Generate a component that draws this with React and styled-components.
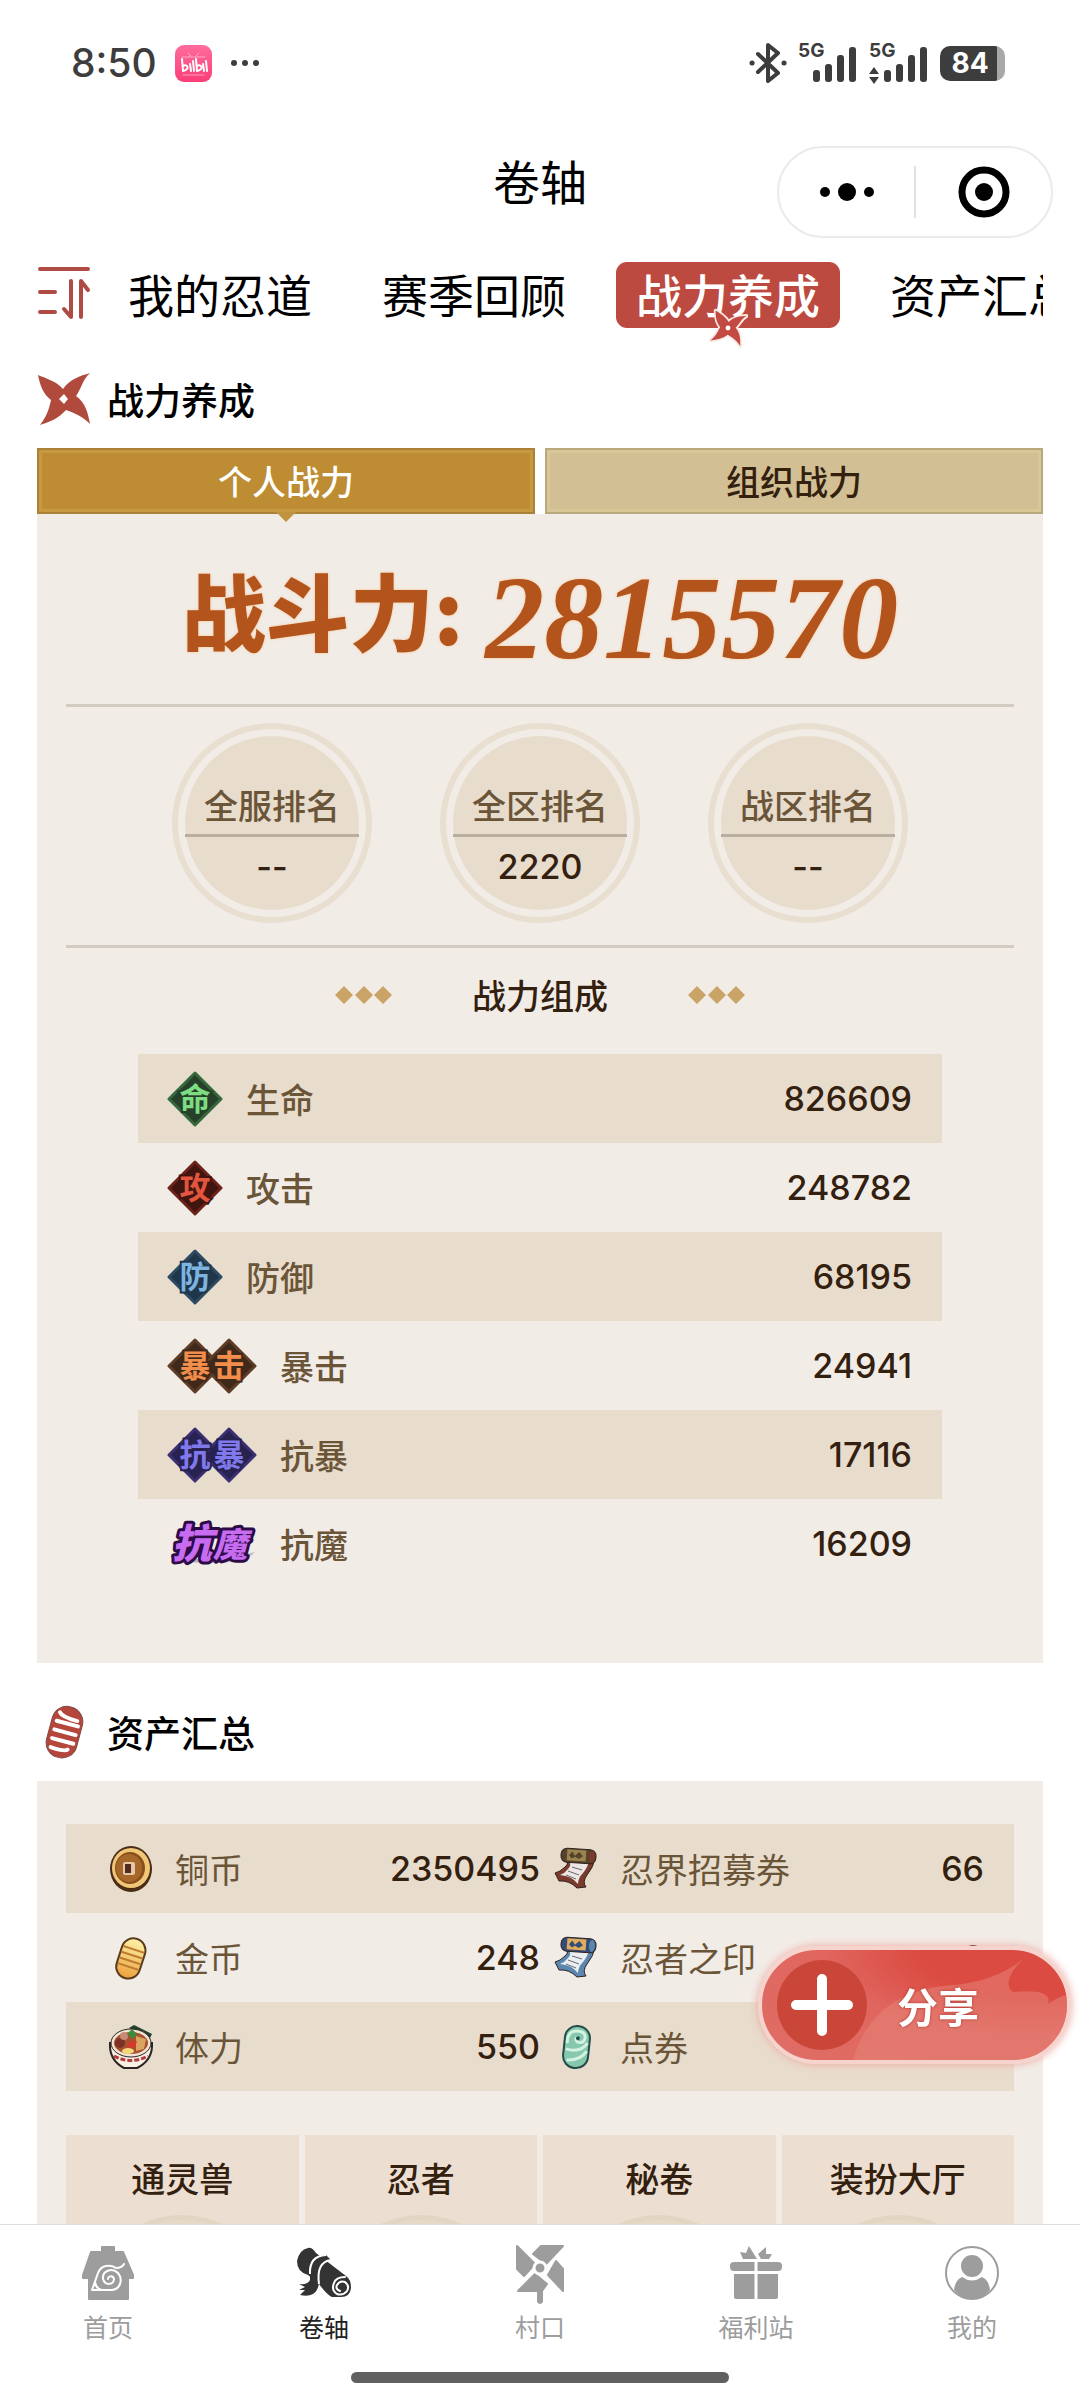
import React from 'react';
import styled, { createGlobalStyle, css, ThemeProvider } from 'styled-components';

const theme = {
    red: '#bd4a40',
    brown: '#6b5538',
    dark: '#33200f',
    panel: '#f2ece7',
    sand: '#e8dccd',
    line: '#d1cbc2',
    grey: '#9d9d9d',
};

const GlobalStyle = createGlobalStyle`
    *, *:before, *:after {
        box-sizing: border-box;
    }
    body {
        margin: 0;
        background: #fff;
        color: #000;
        font-family: "Noto Sans CJK SC", "Noto Sans", sans-serif;
    }
    button {
        margin: 0;
        padding: 0;
        border: 0;
        background: none;
        color: inherit;
        font: inherit;
    }
    a {
        color: inherit;
        text-decoration: none;
    }
    svg {
        display: block;
        flex: none;
    }
    h1, h2, h3, p {
        margin: 0;
    }
`;

const Page = styled.div`
    display: flex;
    flex-direction: column;
    height: 100vh;
    overflow: hidden;
`;

/* ---------- status bar ---------- */

const StatusBar = styled.div`
    display: flex;
    justify-content: space-between;
    align-items: center;
    flex: none;
    height: 126px;
    padding: 0 75px 0 71px;
    color: #3d3d3d;
`;

const StatusGroup = styled.div`
    display: flex;
    align-items: center;
    gap: 18px;
`;

const Clock = styled.span`
    font-family: Inter, sans-serif;
    font-size: 39px;
    font-weight: 500;
    line-height: 48px;
`;

const AppBadge = styled.span`
    display: flex;
    align-items: center;
    justify-content: center;
    width: 37px;
    height: 37px;
    border-radius: 9px;
    background: linear-gradient(#ff6d9c, #fb3d77);
`;

const Battery = styled.span`
    display: flex;
    align-items: center;
    justify-content: center;
    width: 65px;
    height: 35px;
    border-radius: 10px;
    background: linear-gradient(to right, #3d3d3d 57px, #a8a8a8 57px);
    color: #fff;
    font-family: Inter, sans-serif;
    font-size: 28px;
    font-weight: 700;
    line-height: 35px;
    padding-right: 5px;
`;

const Signals = styled.div`
    display: flex;
    align-items: center;
    gap: 11px;
`;

/* ---------- nav bar ---------- */

const NavBar = styled.header`
    display: grid;
    grid-template-columns: 1fr auto 1fr;
    flex: none;
    height: 112px;
    padding: 0 27px;
`;

const Title = styled.h1`
    grid-column: 2;
    font-size: 47px;
    font-weight: 400;
    line-height: 108px;
`;

const Capsule = styled.div`
    display: flex;
    align-items: center;
    justify-self: end;
    align-self: end;
    width: 276px;
    height: 92px;
    border: 2px solid #ebebeb;
    border-radius: 46px;
    button {
        display: flex;
        flex: 1;
        justify-content: center;
    }
    button + button {
        border-left: 2px solid #e2e2e2;
    }
`;

/* ---------- scroll tabs ---------- */

const Tabs = styled.nav`
    display: flex;
    flex: none;
    height: 112px;
    margin: 0 37px;
`;

const MenuButton = styled.button`
    align-self: flex-start;
    padding-top: 28px;
`;

const TabScroller = styled.div`
    display: flex;
    flex: 1;
    gap: 30px;
    margin-left: 17px;
    padding-top: 24px;
    overflow: hidden;
`;

const Tab = styled.a`
    position: relative;
    flex: none;
    height: 66px;
    padding: 0 20px;
    border-radius: 11px;
    font-size: 46px;
    line-height: 62px;
    ${props => props.$active && css`
        background: ${props.theme.red};
        color: #fff;
        font-weight: 500;
    `}
    svg {
        position: absolute;
        left: 92px;
        top: 46px;
    }
`;

/* ---------- content ---------- */

const Content = styled.main`
    flex: 1;
    min-height: 0;
    padding: 0 37px;
    overflow: hidden;
`;

const SectionHeader = styled.div`
    display: flex;
    align-items: center;
    gap: 15px;
    height: 98px;
    margin-top: ${props => (props.$spaced ? '20px' : '0')};
    h2 {
        font-size: 37px;
        font-weight: 500;
        line-height: 48px;
    }
`;

const Switcher = styled.div`
    display: grid;
    grid-template-columns: 1fr 1fr;
    gap: 10px;
`;

const SwitchButton = styled.button`
    position: relative;
    height: 66px;
    border: 2px solid ${props => (props.$active ? '#aa8136' : '#b9a87c')};
    background: ${props => (props.$active ? '#bd8c33' : '#d2bf93')};
    box-shadow: inset 0 0 0 3px ${props => (props.$active ? '#c79a42' : '#d8c898')};
    color: ${props => (props.$active ? '#fff' : props.theme.dark)};
    font-size: 34px;
    font-weight: 500;
    line-height: 60px;
    ${props => props.$active && css`
        &:after {
            content: '';
            position: absolute;
            left: 50%;
            top: 100%;
            margin-left: -10px;
            border: 10px solid transparent;
            border-top-color: #c0943f;
            border-bottom: 0;
        }
    `}
`;

const Panel = styled.section`
    padding: 0 29px;
    background: ${props => props.theme.panel};
`;

const Power = styled.p`
    display: flex;
    align-items: center;
    justify-content: center;
    gap: 22px;
    height: 193px;
    border-bottom: 3px solid ${props => props.theme.line};
    color: #b3541d;
    text-shadow: 0 0 3px #f6c795;
`;

const PowerLabel = styled.span`
    font-size: 84px;
    font-weight: 900;
    line-height: 120px;
`;

const PowerValue = styled.span`
    padding-top: 20px;
    font-family: "Liberation Serif", serif;
    font-size: 118px;
    font-weight: 700;
    font-style: italic;
    line-height: 120px;
`;

const Ranks = styled.div`
    display: flex;
    justify-content: center;
    gap: 68px;
    padding: 16px 0 22px;
    border-bottom: 3px solid ${props => props.theme.line};
`;

const Rank = styled.div`
    display: flex;
    width: 200px;
    height: 200px;
    padding: 7px;
    border: 6px solid #e9dfd1;
    border-radius: 50%;
    text-align: center;
`;

const RankDisc = styled.div`
    flex: 1;
    border-radius: 50%;
    background: ${props => props.theme.sand};
`;

const RankName = styled.h3`
    height: 101px;
    padding-top: 44px;
    border-bottom: 3px solid #b9ae9f;
    color: ${props => props.theme.brown};
    font-size: 34px;
    font-weight: 500;
    line-height: 50px;
`;

const RankValue = styled.p`
    color: ${props => props.theme.dark};
    font-family: Inter, sans-serif;
    font-size: 34px;
    font-weight: 500;
    line-height: 60px;
`;

const SubHeading = styled.div`
    display: flex;
    align-items: center;
    justify-content: center;
    gap: 80px;
    height: 106px;
    padding-bottom: 12px;
    color: ${props => props.theme.dark};
    h3 {
        font-size: 34px;
        font-weight: 500;
        line-height: 50px;
    }
`;

const StatsWrap = styled.div`
    padding: 0 72px 75px;
`;

const Table = styled.table`
    width: 100%;
    table-layout: fixed;
    border-collapse: collapse;
    tr {
        height: 89px;
    }
    tr:nth-child(odd) {
        background: ${props => props.theme.sand};
    }
    th, td {
        padding: 0;
    }
`;

const Name = styled.th`
    color: ${props => props.theme.brown};
    font-size: 34px;
    font-weight: ${props => (props.$light ? 400 : 500)};
    line-height: 50px;
    text-align: left;
    white-space: nowrap;
    div {
        display: flex;
        align-items: center;
        gap: 22px;
        padding-left: ${props => props.$indent}px;
    }
`;

const Value = styled.td`
    color: ${props => props.theme.dark};
    font-family: Inter, sans-serif;
    font-size: 34px;
    font-weight: 500;
    line-height: 50px;
    text-align: right;
    && {
        padding-right: ${props => props.$end}px;
    }
`;

const AssetsPanel = styled(Panel)`
    padding-top: 43px;
`;

const Tiles = styled.div`
    display: grid;
    grid-template-columns: repeat(4, 1fr);
    gap: 6px;
    margin-top: 44px;
`;

const Tile = styled.a`
    display: flex;
    flex-direction: column;
    align-items: center;
    height: 300px;
    padding-top: 18px;
    background: #ecded1;
    color: ${props => props.theme.dark};
    font-size: 34px;
    font-weight: 500;
    line-height: 50px;
    &:after {
        content: '';
        width: 190px;
        height: 190px;
        margin-top: 12px;
        border: 5px solid #e2d5c2;
        border-radius: 50%;
        background: #e6d9c6;
    }
`;

/* ---------- share button ---------- */

const ShareButton = styled.button`
    position: fixed;
    right: 9px;
    bottom: 337px;
    display: flex;
    align-items: center;
    gap: 30px;
    width: 313px;
    height: 118px;
    padding-left: 15px;
    overflow: hidden;
    border: 4px solid #f6d3cd;
    border-radius: 59px;
    background: radial-gradient(ellipse at 90% 0, #db4b41 0 30%, #e0665f 55%, #df6e66);
    box-shadow: 0 0 9px #eda69d;
    color: #fff;
    font-size: 41px;
    font-weight: 700;
    text-shadow: 0 0 3px #a8342c;
    line-height: 60px;
`;

const Wave = styled.svg`
    position: absolute;
    right: 0;
    bottom: 0;
`;

const ShareIcon = styled.svg`
    position: relative;
`;

const ShareText = styled.span`
    position: relative;
`;

/* ---------- bottom bar ---------- */

const BottomBar = styled.footer`
    flex: none;
    padding-bottom: 18px;
    border-top: 1px solid #dedede;
    background: #fff;
`;

const BottomNav = styled.nav`
    display: grid;
    grid-template-columns: repeat(5, 1fr);
    padding-top: 16px;
`;

const BottomLink = styled.a`
    display: flex;
    flex-direction: column;
    align-items: center;
    gap: 6px;
    color: ${props => (props.$active ? '#222' : props.theme.grey)};
    font-size: 25px;
    line-height: 30px;
`;

const HomeIndicator = styled.div`
    width: 35%;
    height: 11px;
    margin: 31px auto 0;
    border-radius: 6px;
    background: #606060;
`;

/* ---------- drawings ---------- */

const Bluetooth = () => (
    <svg width="38" height="42" viewBox="0 0 38 42" fill="none" stroke="#3d3d3d" strokeWidth="4" strokeLinejoin="round" strokeLinecap="round">
        <path d="M9 12 29 31 19 39V3l10 8L9 30" />
        <path d="M3 21h.1M35 21h.1" strokeWidth="5" />
    </svg>
);

const Signal = ({ arrows }) => (
    <svg width="60" height="54" viewBox="0 -6 60 54" fill="#3d3d3d">
        <text x="0" y="15" fontFamily="Inter, sans-serif" fontSize="19" fontWeight="700">5G</text>
        <rect x="15" y="28" width="7" height="12" rx="3" />
        <rect x="27" y="22" width="7" height="18" rx="3" />
        <rect x="39" y="13" width="7" height="27" rx="3" />
        <rect x="51" y="5" width="7" height="35" rx="3" />
        {arrows && <path d="M0 32 5 25l5 7zM0 35h10l-5 7z" />}
    </svg>
);

const BiliLogo = () => (
    <svg width="31" height="27" viewBox="0 0 31 27" fill="none" stroke="#fff" strokeLinecap="round">
        <path d="M10 3l3 3M21 3l-3 3M4 7h23M5 25h21" strokeWidth="1" opacity=".5" />
        <path d="M4 9l1 12M5 16c5-3 7 4 0 5M12 14l1 7M15 11l1 10M18 9l1 12M19 16c5-3 7 4 0 5M25 14l1 7M28 11l1 10" strokeWidth="2" />
    </svg>
);

const Dots = () => (
    <svg width="30" height="8" viewBox="0 0 30 8" fill="#3d3d3d">
        <circle cx="4" cy="4" r="3" />
        <circle cx="15" cy="4" r="3" />
        <circle cx="26" cy="4" r="3" />
    </svg>
);

const MenuIcon = () => (
    <svg width="54" height="54" viewBox="0 0 54 54" fill="none" stroke="#ae4b42" strokeWidth="4" strokeLinecap="round" strokeLinejoin="round">
        <path d="M3 3h48M3 26h15M3 46h15M34 15v36l-7-8M44 51V15l7 9" />
    </svg>
);

const starPath = 'M1 3C8 6 19 9 26 17C33 7 43 4 53 1C45 8 44 18 39 24C49 31 51 42 53 52C46 45 38 41 29 38C22 46 13 50 3 53C10 44 12 37 14 28C6 22 3 13 1 3Z';

const Shuriken = () => (
    <svg width="55" height="54" viewBox="0 0 55 54">
        <path d={starPath} fill="#b04a3d" />
        <path d="M27 22l4 5-4 5-5-5z" fill="#fff" />
    </svg>
);

const MiniShuriken = () => (
    <svg width="40" height="40" viewBox="-6 -6 66 66">
        <path d={starPath} fill="#c34a43" stroke="#fbe9e6" strokeWidth="6" strokeLinejoin="round" paintOrder="stroke" transform="rotate(12 27 27)" />
        <circle cx="27" cy="27" r="4" fill="#fff" />
    </svg>
);

const CoinStrip = () => (
    <svg width="55" height="54" viewBox="0 0 55 54">
        <g transform="rotate(15 27 27)">
            <rect x="12" y="1" width="31" height="52" rx="15" fill="#b4463c" stroke="#7d4b47" strokeWidth="1" />
            <g stroke="#fff" strokeWidth="4" strokeLinecap="round">
                <path d="M18 9q3 4 19 4M17 18h22M17 27h22M17 36h22M18 45q15 1 17-2" fill="none" />
            </g>
        </g>
    </svg>
);

const Diamonds = () => (
    <svg width="57" height="20" viewBox="0 0 57 20" fill="#c9a466">
        <path d="M9 1l9 9-9 9-9-9zM29 1l9 9-9 9-9-9zM48 1l9 9-9 9-9-9z" />
    </svg>
);

const Glyph = ({ chars, fill, edge, ink }) => {
    const list = chars.split('');
    const width = list.length > 1 ? 91 : 57;
    return (
        <svg width={width} height="58" viewBox={`0 0 ${width} 58`}>
            {list.map((c, i) => (
                <path key={c} d={`M${28 + i * 34} 3l26 26-26 26-26-26z`} fill={fill} stroke={edge} strokeWidth="3" strokeLinejoin="round" />
            ))}
            {list.map((c, i) => (
                <text key={c} x={28 + i * 34} y="40" textAnchor="middle" fontSize="31" fontWeight="700" fill={ink} stroke={fill} strokeWidth="4" paintOrder="stroke">{c}</text>
            ))}
        </svg>
    );
};

const MagicGlyph = () => (
    <svg width="91" height="58" viewBox="0 0 91 58">
        <path d="M3 39q40 12 85-2-10 11-43 11Q8 48 3 39z" fill="#9a8ba6" opacity=".6" />
        <g fontWeight="900" fontStyle="italic" fill="#c76cf0" stroke="#2d0b47" strokeWidth="6" strokeLinejoin="round" paintOrder="stroke">
            <text x="5" y="43" fontSize="40">抗</text>
            <text x="46" y="42" fontSize="34">魔</text>
        </g>
    </svg>
);

const CopperIcon = () => (
    <svg width="44" height="48" viewBox="0 0 44 48">
        <ellipse cx="22" cy="24" rx="21" ry="23" fill="#4a2c17" />
        <ellipse cx="22" cy="23" rx="19" ry="20" fill="#f0c777" />
        <ellipse cx="21" cy="23" rx="15" ry="16" fill="#8a4f1c" />
        <ellipse cx="20" cy="23" rx="13" ry="14" fill="#a5672a" />
        <rect x="14" y="17" width="12" height="13" rx="2" fill="#e5c6a8" />
        <rect x="16" y="19" width="6" height="9" fill="#532a1f" />
    </svg>
);

const GoldIcon = () => (
    <svg width="44" height="48" viewBox="0 0 44 48">
        <defs>
            <linearGradient id="gold" x2="0" y2="1">
                <stop stopColor="#fff2a8" />
                <stop offset="1" stopColor="#eda03c" />
            </linearGradient>
        </defs>
        <g transform="rotate(18 22 24)">
            <rect x="10" y="4" width="24" height="41" rx="12" fill="url(#gold)" stroke="#5a3b1e" strokeWidth="2" />
            <path d="M11 15h22M11 21h22M11 27h22M11 33h22" stroke="#bb7c2e" strokeWidth="2" />
        </g>
    </svg>
);

const RamenIcon = () => (
    <svg width="44" height="48" viewBox="0 0 44 48">
        <path d="M20 5l5-3 18 9-4 8z" fill="#26402b" />
        <path d="M1 20q-1 17 14 25h13q16-8 15-25z" fill="#f7efe4" stroke="#2c2422" strokeWidth="2" />
        <ellipse cx="22" cy="20" rx="20" ry="14" fill="#efe4d4" stroke="#2c2422" strokeWidth="1" />
        <ellipse cx="22" cy="20" rx="17" ry="11" fill="#a8502f" />
        <path d="M27 13l10 3-2 10-8 2z" fill="#d9a45f" />
        <circle cx="11" cy="20" r="5" fill="#7c3327" />
        <circle cx="15" cy="13" r="4" fill="#c98a78" />
        <path d="M18 11l5-5 5 5-4 5z" fill="#3f8a38" />
        <path d="M20 19l8-1-2 6-7 1z" fill="#d8382b" />
        <ellipse cx="19" cy="28" rx="6" ry="3" fill="#f5d87c" />
        <path d="M5 33q17 9 34 0" stroke="#b53b3b" strokeWidth="3" strokeDasharray="5 2" fill="none" />
    </svg>
);

const ScrollIcon = ({ roll, edge, deco, paper }) => (
    <svg width="44" height="48" viewBox="0 0 44 48">
        <path d="M11 14q5 4 0 8-5 5-10 6l4 8q10-1 18 7l9-1q-4-5 1-12 7-8 8-18z" fill={edge} stroke="#30231f" strokeWidth="1" />
        <path d="M15 16q3 4-1 8-3 4-8 6 12 1 18 9 0-6 5-11 5-6 6-12z" fill={paper} />
        <path d="M18 22l10 3M14 26l11 4M12 30l10 4" stroke="#6c6570" strokeWidth="1" />
        <g transform="rotate(4 24 11)">
            <rect x="7" y="4" width="35" height="14" rx="6" fill={roll} stroke="#30231f" strokeWidth="1" />
            <rect x="13" y="5" width="19" height="11" fill={deco} />
            <path d="M15 11l3-4 3 4 4-4 4 4-4 3-4-2-3 2z" fill={roll} />
            <ellipse cx="38" cy="11" rx="3" ry="6" fill={edge} />
        </g>
    </svg>
);

const TicketIcon = () => (
    <svg width="44" height="48" viewBox="0 0 44 48">
        <g transform="rotate(6 22 24)">
            <rect x="10" y="3" width="25" height="42" rx="12" fill="#86c8ad" stroke="#234c48" strokeWidth="2" />
            <path d="M13 21Q11 9 22 8q9 0 8 7-1 5-7 4-4-3 0-5M12 27q15 3 21-8M14 38q14-1 19-11" fill="none" stroke="#d3f2df" strokeWidth="3" />
            <circle cx="23" cy="15" r="2" fill="#234c48" />
        </g>
    </svg>
);

const HomeIcon = () => (
    <svg width="60" height="64" viewBox="0 0 60 64" fill="none">
        <path d="M24 6h12v5h9l10 23v3h-5v21H11V37H5v-3l8-23h11z" fill="#9d9d9d" stroke="#9d9d9d" strokeWidth="2" strokeLinejoin="round" />
        <path d="M46 23q-2 4-8 4C32 23 23 24 20 32l-6 17h20c9-1 11-11 6-17-6-6-16-2-15 6 2 7 11 6 11 0-1-4-6-3-6 0M17 41q1 7 7 8" stroke="#fff" strokeWidth="2" strokeLinecap="round" strokeLinejoin="round" />
    </svg>
);

const RollIcon = () => (
    <svg width="60" height="64" viewBox="0 0 60 64" fill="none">
        <path d="M14 7q4-1 8 5l30 23q5 3 5 12-1 9-10 9h-9q-5-2-13-13L14 34Q3 31 3 20 5 9 14 7z" fill="#333" />
        <path d="M16 31q1-17 16-17l5 5q-13 1-12 21 0 9-6 13-5 3-13 1l5-5-6 0 6-3-6-3q9 1 11-4z" fill="#333" />
        <path d="M16 33q-1-18 16-19M25 43q-3-22 12-24" stroke="#fff" strokeWidth="2" />
        <path d="M40 42q2-6 11-6M46 50q-5-2-3-6 3-5 8-3 5 4 2 9-4 5-10 3-6-4-3-11" stroke="#fff" strokeWidth="2" strokeLinecap="round" />
    </svg>
);

const PinwheelIcon = () => (
    <svg width="60" height="64" viewBox="0 0 60 64" fill="#9d9d9d">
        <g stroke="#9d9d9d" strokeWidth="2" strokeLinejoin="round">
            <path d="M7 5l18 18-11 12-7-7zM31 5h22L36 23 23 13zM46 20l7 8v22L38 34zM25 33l12 10-5 7H8z" />
        </g>
        <path d="M27 49h6v12q-3 4-6 0z" />
        <circle cx="30" cy="27" r="6" stroke="#fff" strokeWidth="3" />
    </svg>
);

const GiftIcon = () => (
    <svg width="60" height="64" viewBox="0 0 60 64" fill="#9d9d9d">
        <path d="M14 11l6 1 3-7 8 13H17zM32 13l8-7v7h6l-3 5h-8z" />
        <rect x="4" y="21" width="52" height="9" rx="4" />
        <path d="M8 33h44v23q0 2-2 2H10q-2 0-2-2z" />
        <path d="M30 20v39" stroke="#fff" strokeWidth="3" />
    </svg>
);

const UserIcon = () => (
    <svg width="60" height="64" viewBox="0 0 60 64" fill="#9d9d9d">
        <circle cx="30" cy="32" r="26" fill="none" stroke="#9d9d9d" strokeWidth="2" />
        <circle cx="30" cy="25" r="11" />
        <path d="M20 36q10 7 20 0 7 3 8 13-7 9-18 9t-18-9q1-10 8-13z" />
    </svg>
);

/* ---------- data ---------- */

const tabs = ['我的忍道', '赛季回顾', '战力养成', '资产汇总'];

const ranks = [
    { name: '全服排名', value: '--' },
    { name: '全区排名', value: '2220' },
    { name: '战区排名', value: '--' },
];

const stats = [
    { name: '生命', value: '826609', icon: <Glyph chars="命" fill="#26402a" edge="#35683a" ink="#7edc83" /> },
    { name: '攻击', value: '248782', icon: <Glyph chars="攻" fill="#40150f" edge="#6b221b" ink="#e2553e" /> },
    { name: '防御', value: '68195', icon: <Glyph chars="防" fill="#20364a" edge="#2c4a60" ink="#7db4e0" /> },
    { name: '暴击', value: '24941', icon: <Glyph chars="暴击" fill="#3e291b" edge="#5f3c26" ink="#f28d4c" /> },
    { name: '抗暴', value: '17116', icon: <Glyph chars="抗暴" fill="#27224f" edge="#3b2f72" ink="#8079ec" /> },
    { name: '抗魔', value: '16209', icon: <MagicGlyph /> },
];

const assets = [
    [
        { name: '铜币', value: '2350495', icon: <CopperIcon /> },
        { name: '忍界招募券', value: '66', icon: <ScrollIcon roll="#54422a" edge="#7a3a2c" deco="#9a8350" paper="#ece6e4" /> },
    ],
    [
        { name: '金币', value: '248', icon: <GoldIcon /> },
        { name: '忍者之印', value: '0', icon: <ScrollIcon roll="#354c78" edge="#5b86b0" deco="#e0ae5a" paper="#e9eef0" /> },
    ],
    [
        { name: '体力', value: '550', icon: <RamenIcon /> },
        { name: '点券', value: '', icon: <TicketIcon /> },
    ],
];

const tiles = ['通灵兽', '忍者', '秘卷', '装扮大厅'];

const bottomLinks = [
    { name: '首页', icon: <HomeIcon /> },
    { name: '卷轴', icon: <RollIcon /> },
    { name: '村口', icon: <PinwheelIcon /> },
    { name: '福利站', icon: <GiftIcon /> },
    { name: '我的', icon: <UserIcon /> },
];

/* ---------- parts ---------- */

const Status = () => (
    <StatusBar>
        <StatusGroup>
            <Clock>8:50</Clock>
            <AppBadge><BiliLogo /></AppBadge>
            <Dots />
        </StatusGroup>
        <Signals>
            <Bluetooth />
            <Signal />
            <Signal arrows />
            <Battery>84</Battery>
        </Signals>
    </StatusBar>
);

const Header = () => (
    <NavBar>
        <Title>卷轴</Title>
        <Capsule>
            <button type="button" aria-label="更多">
                <svg width="56" height="50" viewBox="0 0 56 50">
                    <circle cx="6" cy="25" r="5" />
                    <circle cx="28" cy="25" r="9" />
                    <circle cx="50" cy="25" r="5" />
                </svg>
            </button>
            <button type="button" aria-label="关闭">
                <svg width="52" height="52" viewBox="0 0 52 52">
                    <circle cx="26" cy="26" r="22" fill="none" stroke="#000" strokeWidth="7" />
                    <circle cx="26" cy="26" r="9" />
                </svg>
            </button>
        </Capsule>
    </NavBar>
);

const TabRow = () => (
    <Tabs>
        <MenuButton type="button" aria-label="排序"><MenuIcon /></MenuButton>
        <TabScroller>
            {tabs.map(name => (
                <Tab key={name} href="#" $active={name === '战力养成'}>
                    {name}
                    {name === '战力养成' && <MiniShuriken />}
                </Tab>
            ))}
        </TabScroller>
    </Tabs>
);

const PowerPanel = () => (
    <Panel>
        <Power>
            <PowerLabel>战斗力:</PowerLabel>
            <PowerValue>2815570</PowerValue>
        </Power>
        <Ranks>
            {ranks.map(rank => (
                <Rank key={rank.name}>
                    <RankDisc>
                        <RankName>{rank.name}</RankName>
                        <RankValue>{rank.value}</RankValue>
                    </RankDisc>
                </Rank>
            ))}
        </Ranks>
        <SubHeading>
            <Diamonds />
            <h3>战力组成</h3>
            <Diamonds />
        </SubHeading>
        <StatsWrap>
            <Table>
                <tbody>
                    {stats.map(stat => (
                        <tr key={stat.name}>
                            <Name scope="row" $indent={29}><div>{stat.icon}{stat.name}</div></Name>
                            <Value $end={30}>{stat.value}</Value>
                        </tr>
                    ))}
                </tbody>
            </Table>
        </StatsWrap>
    </Panel>
);

const Assets = () => (
    <AssetsPanel>
        <Table>
            <tbody>
                {assets.map(([left, right]) => (
                    <tr key={left.name}>
                        <Name scope="row" $light $indent={43}><div>{left.icon}{left.name}</div></Name>
                        <Value $end={0}>{left.value}</Value>
                        <Name scope="row" $light $indent={14}><div>{right.icon}{right.name}</div></Name>
                        <Value $end={30}>{right.value}</Value>
                    </tr>
                ))}
            </tbody>
        </Table>
        <Tiles>
            {tiles.map(name => <Tile key={name} href="#">{name}</Tile>)}
        </Tiles>
    </AssetsPanel>
);

const Share = () => (
    <ShareButton type="button">
        <Wave width="214" height="110" viewBox="0 0 214 110">
            <path d="M0 110Q20 40 100 35q50-4 80-35-35 30-20 42 40-4 35 12 20-13 20-6v62z" fill="#e58478" opacity=".55" />
        </Wave>
        <ShareIcon width="90" height="90" viewBox="0 0 90 90">
            <circle cx="45" cy="45" r="45" fill="#c94638" />
            <path d="M45 19v52M19 45h52" stroke="#fff" strokeWidth="10" strokeLinecap="round" />
        </ShareIcon>
        <ShareText>分享</ShareText>
    </ShareButton>
);

const Footer = () => (
    <BottomBar>
        <BottomNav>
            {bottomLinks.map(link => (
                <BottomLink key={link.name} href="#" $active={link.name === '卷轴'}>
                    {link.icon}
                    {link.name}
                </BottomLink>
            ))}
        </BottomNav>
        <HomeIndicator />
    </BottomBar>
);

const App = () => (
    <ThemeProvider theme={theme}>
        <GlobalStyle />
        <Page>
            <Status />
            <Header />
            <TabRow />
            <Content>
                <SectionHeader>
                    <Shuriken />
                    <h2>战力养成</h2>
                </SectionHeader>
                <Switcher>
                    <SwitchButton type="button" $active>个人战力</SwitchButton>
                    <SwitchButton type="button">组织战力</SwitchButton>
                </Switcher>
                <PowerPanel />
                <SectionHeader $spaced>
                    <CoinStrip />
                    <h2>资产汇总</h2>
                </SectionHeader>
                <Assets />
            </Content>
            <Footer />
            <Share />
        </Page>
    </ThemeProvider>
);

export default App;
